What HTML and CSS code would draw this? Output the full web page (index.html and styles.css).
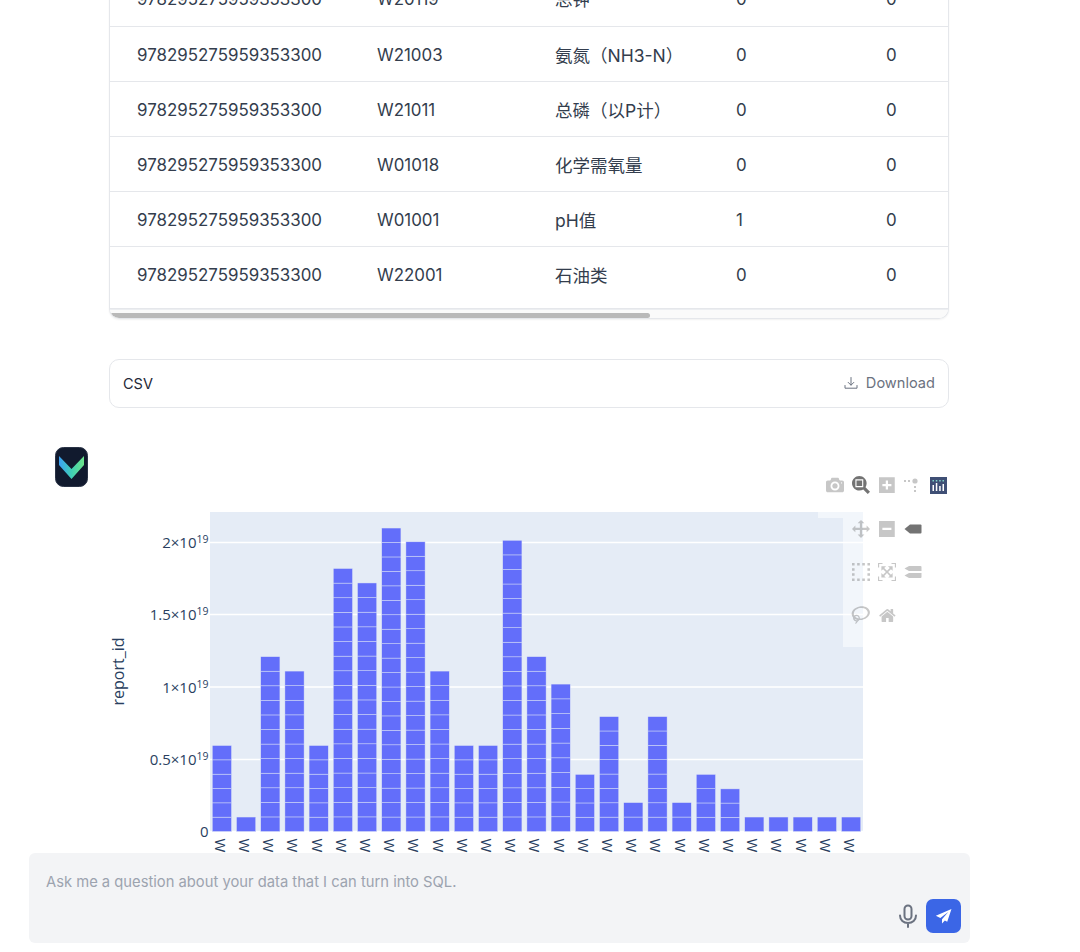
FILE: index.html
```html
<!DOCTYPE html>
<html lang="en">
<head>
<meta charset="utf-8">
<title>Chat</title>
<link rel="stylesheet" href="styles.css">
</head>
<body>
<main class="thread">
  <section class="table-card">
    <div class="table-clip">
      <table class="data">
        <tbody>
          <tr><td>978295275959353300</td><td>W20119</td><td class="cjk">总钾</td><td>0</td><td>0</td></tr>
          <tr><td>978295275959353300</td><td>W21003</td><td class="cjk">氨氮（NH3-N）</td><td>0</td><td>0</td></tr>
          <tr><td>978295275959353300</td><td>W21011</td><td class="cjk">总磷（以P计）</td><td>0</td><td>0</td></tr>
          <tr><td>978295275959353300</td><td>W01018</td><td class="cjk">化学需氧量</td><td>0</td><td>0</td></tr>
          <tr><td>978295275959353300</td><td>W01001</td><td class="cjk">pH值</td><td>1</td><td>0</td></tr>
          <tr><td>978295275959353300</td><td>W22001</td><td class="cjk">石油类</td><td>0</td><td>0</td></tr>
        </tbody>
      </table>
    </div>
    <div class="scroll-track"><div class="scroll-thumb"></div></div>
  </section>

  <section class="csv-bar">
    <span class="csv-label">CSV</span>
    <a class="download">
      <svg class="download-icon" viewBox="0 0 14 14" fill="none" stroke="currentColor" stroke-width="1" stroke-linecap="round" stroke-linejoin="round"><path d="M7 1.500v7.500M4.200 6.400 7 9.200l2.800-2.800M1 9.500V12.200h12V9.500"/></svg>
      <span>Download</span>
    </a>
  </section>

  <section class="answer">
    <svg class="avatar" viewBox="0 0 33 40">
      <defs>
        <linearGradient id="vg" x1="0" y1="0" x2="1" y2="0">
          <stop offset="0" stop-color="#3b9ff5"/>
          <stop offset=".5" stop-color="#3fcfb4"/>
          <stop offset="1" stop-color="#6ee58a"/>
        </linearGradient>
      </defs>
      <rect x="0.500" y="0.500" width="32" height="39" rx="8" fill="#111a2e" stroke="#2a3346"/>
      <path d="M4 9 16.500 22 29 9V18L16.500 32 4 18Z" fill="url(#vg)"/>
    </svg>

    <svg class="chart" viewBox="109 463 840 400">
      <rect x="210" y="512" width="653" height="319.500" fill="#e5ecf6"/>
      <g stroke="#fff" stroke-width="1.500">
        <path d="M210 542.500H863M210 614.500H863M210 687H863M210 759.500H863M210 831.500H863"/>
      </g>
      <g id="bars"></g>
      <g class="tick-y">
        <text x="208.500" y="548" text-anchor="end">2×10<tspan class="sup" dy="-5">19</tspan></text>
        <text x="208.500" y="620" text-anchor="end">1.5×10<tspan class="sup" dy="-5">19</tspan></text>
        <text x="208.500" y="692.500" text-anchor="end">1×10<tspan class="sup" dy="-5">19</tspan></text>
        <text x="208.500" y="764.500" text-anchor="end">0.5×10<tspan class="sup" dy="-5">19</tspan></text>
        <text x="208.500" y="837" text-anchor="end">0</text>
      </g>
      <text class="axis-title" transform="translate(124 671.500) rotate(-90)" text-anchor="middle">report_id</text>
      <g id="xticks" class="tick-x"></g>

      <path d="M818 512H863V647H843V518H818Z" fill="#fff" fill-opacity=".5"/>

      <g class="mode">
        <path transform="translate(826 476) scale(.018) matrix(1 0 0 -1 0 850)" d="m500 450c-83 0-150-67-150-150 0-83 67-150 150-150 83 0 150 67 150 150 0 83-67 150-150 150z m400 150h-120c-16 0-34 13-39 29l-31 93c-6 15-23 28-40 28h-340c-16 0-34-13-39-28l-31-94c-6-15-23-28-40-28h-120c-55 0-100-45-100-100v-450c0-55 45-100 100-100h800c55 0 100 45 100 100v450c0 55-45 100-100 100z m-400-550c-138 0-250 112-250 250 0 138 112 250 250 250 138 0 250-112 250-250 0-138-112-250-250-250z m365 380c-19 0-35 16-35 35 0 19 16 35 35 35 19 0 35-16 35-35 0-19-16-35-35-35z"/>
        <path class="on" transform="translate(852 476) scale(.018) matrix(1 0 0 -1 0 850)" d="m1000-25l-250 251c40 63 63 138 63 218 0 224-182 406-407 406-224 0-406-182-406-406s183-406 407-406c80 0 155 22 218 62l250-250 125 125z m-812 250l0 438 437 0 0-438-437 0z m62 375l313 0 0-312-313 0 0 312z"/>
        <path transform="translate(879 476) scale(.018) matrix(1 0 0 -1 0 850)" d="m1 787l0-875 875 0 0 875-875 0z m687-500l-187 0 0-187-125 0 0 187-188 0 0 125 188 0 0 187 125 0 0-187 187 0 0-125z"/>
        <g>
          <circle cx="915" cy="481" r="2.600"/>
          <rect x="904" y="480" width="2" height="2"/><rect x="908" y="480" width="2" height="2"/>
          <rect x="914" y="486" width="2" height="2"/><rect x="914" y="490" width="2" height="2"/>
        </g>
        <path transform="translate(852 520) scale(.018) matrix(1 0 0 -1 0 850)" d="m1000 350l-187 188 0-125-250 0 0 250 125 0-188 187-187-187 125 0 0-250-250 0 0 125-188-188 186-187 0 125 252 0 0-250-125 0 187-188 188 188-125 0 0 250 250 0 0-125 187 188z"/>
        <path transform="translate(879 520) scale(.018) matrix(1 0 0 -1 0 850)" d="m0 788l0-876 875 0 0 876-875 0z m688-500l-500 0 0 125 500 0 0-125z"/>
        <path class="on" d="M904.500 529 910 524.500H920.500Q921.500 524.500 921.500 525.500V532.500Q921.500 533.500 920.500 533.500H910Z"/>
        <path transform="translate(852 563) scale(.018) matrix(1 0 0 -1 0 850)" d="m0 850l0-143 143 0 0 143-143 0z m286 0l0-143 143 0 0 143-143 0z m285 0l0-143 143 0 0 143-143 0z m286 0l0-143 143 0 0 143-143 0z m-857-286l0-143 143 0 0 143-143 0z m857 0l0-143 143 0 0 143-143 0z m-857-285l0-143 143 0 0 143-143 0z m857 0l0-143 143 0 0 143-143 0z m-857-286l0-143 143 0 0 143-143 0z m286 0l0-143 143 0 0 143-143 0z m285 0l0-143 143 0 0 143-143 0z m286 0l0-143 143 0 0 143-143 0z"/>
        <path transform="translate(878 563) scale(.018) matrix(1 0 0 -1 0 850)" d="m250 850l-187 0-63 0 0-62 0-188 63 0 0 188 187 0 0 62z m688 0l-188 0 0-62 188 0 0-188 62 0 0 188 0 62-62 0z m-875-938l0 188-63 0 0-188 0-62 63 0 187 0 0 62-187 0z m875 188l0-188-188 0 0-62 188 0 62 0 0 62 0 188-62 0z m-125 188l-1 0-93-94-156 156 156 156 92-93 2 0 0 250-250 0 0-2 93-92-156-156-156 156 94 92 0 2-250 0 0-250 0 0 93 93 157-156-157-156-93 94 0 0 0-250 250 0 0 0-94 93 156 157 156-157-93-93 0 0 250 0 0 250z"/>
        <path d="M904.500 568.500 909 566H920.500Q921.500 566 921.500 567V571H909ZM904.500 575.500 909 573H921.500V577Q921.500 578 920.500 578H909Z"/>
        <path transform="translate(851.500 606) scale(.018) matrix(1 0 0 -1 0 850)" d="m1018 538c-36 207-290 336-568 286-277-48-473-256-436-463 10-57 36-108 76-151-13-66 11-137 68-183 34-28 75-41 114-42l-55-70 0 0c-2-1-3-2-4-3-10-14-8-34 5-45 14-11 34-8 45 4 1 1 2 3 2 5l0 0 113 140c16 11 31 24 45 40 4 3 6 7 8 11 48-3 100 0 151 9 278 48 473 255 436 462z m-624-379c-80 14-149 48-197 96 42 42 109 47 156 9 33-26 47-66 41-105z m-187-74c-19 16-33 37-39 60 50-32 109-55 174-68-42-25-95-24-135 8z m360 75c-34-7-69-9-102-8 8 62-16 128-68 170-73 59-175 54-244-5-9 20-16 40-20 61-28 159 121 317 333 354s407-60 434-217c28-159-121-318-333-355z"/>
        <path transform="translate(879 606.500) scale(.018) matrix(1 0 0 -1 0 850)" d="m786 296v-267q0-15-11-26t-25-10h-214v214h-143v-214h-214q-15 0-25 10t-11 26v267q0 1 0 2t0 2l321 264 321-264q1-1 1-4z m124 39l-34-41q-5-5-12-6h-2q-7 0-12 3l-386 322-386-322q-7-4-13-4-7 2-12 7l-35 41q-4 5-3 13t6 12l401 334q18 15 42 15t43-15l136-114v109q0 8 5 13t13 5h107q8 0 13-5t5-13v-227l122-102q5-5 6-12t-4-13z"/>
      </g>
      <g>
        <rect x="930" y="477" width="17" height="17" fill="#3f4f75"/>
        <g fill="#fff"><rect x="932.500" y="485" width="1.500" height="6"/><rect x="935.800" y="483" width="1.500" height="8"/><rect x="939.200" y="486" width="1.500" height="5"/><rect x="942.500" y="484" width="1.500" height="7"/></g>
        <g fill="#7fd5c8"><rect x="932.500" y="480" width="1.500" height="1.500"/><rect x="935.800" y="480" width="1.500" height="1.500"/><rect x="939.200" y="480" width="1.500" height="1.500"/><rect x="942.500" y="480" width="1.500" height="1.500"/></g>
      </g>
    </svg>
  </section>
</main>

<form class="composer">
  <div class="placeholder">Ask me a question about your data that I can turn into SQL.</div>
  <div class="composer-actions">
    <svg class="mic" viewBox="0 0 20 24" fill="none" stroke="#6b7280" stroke-width="2" stroke-linecap="round"><rect x="6.500" y="1.500" width="7" height="14" rx="3.500"/><path d="M2 11.500c0 4.500 3.500 7.500 8 7.500s8-3 8-7.500M10 19v4"/></svg>
    <button class="send" type="button">
      <svg viewBox="0 0 16 16" class="send-icon"><path d="M15.500 1 .8 7.300 5 9.500 12.500 3.800 6.600 10.500V14.500L9.300 11.700 11.500 13Z" fill="#fff"/></svg>
    </button>
  </div>
</form>
<script src="chart.js"></script>
</body>
</html>
```

FILE: styles.css
```css
* { box-sizing: border-box; }
html, body { margin: 0; height: 952px; overflow: hidden; background: #fff; }
body {
  position: relative;
  font-family: Inter, "Noto Sans CJK SC", "Liberation Sans", sans-serif;
  color: #333d4d;
}
.thread { margin-top: -29px; padding-left: 109px; width: 949px; }

.table-card {
  border: 1px solid #e5e7eb;
  border-top: 0;
  border-radius: 0 0 10px 10px;
  overflow: hidden;
  box-shadow: 0 1px 2px rgba(0, 0, 0, .06);
}
.table-clip { overflow: hidden; }
.data { border-collapse: collapse; table-layout: fixed; width: 1300px; font-size: 16.900px; }
.data td { height: 55px; padding: 2px 0 0 27px; border-bottom: 1px solid #e5e7eb; white-space: nowrap; }
.data td.cjk { font-size: 17.500px; padding-top: 1px; }
.data td:nth-child(1) { width: 240px; }
.data td:nth-child(2) { width: 178px; }
.data td:nth-child(3) { width: 181px; }
.data td:nth-child(4) { width: 150px; }
.data tr:last-child td { height: 62px; padding-bottom: 7px; }

.scroll-track { height: 9px; background: #fafafa; border-top: 1px solid #eceef1; overflow: hidden; }
.scroll-thumb { width: 540px; height: 5px; margin-top: 3px; background: #b9b9b9; border-radius: 0 3px 3px 3px; }

.csv-bar {
  display: flex;
  align-items: center;
  justify-content: space-between;
  height: 49px;
  margin-top: 40px;
  padding: 0 13px;
  border: 1px solid #e5e7eb;
  border-radius: 10px;
}
.csv-label { font-size: 14.500px; color: #1f2937; }
.download { display: flex; align-items: center; gap: 8px; font-size: 14.600px; color: #6b7280; }
.download-icon { width: 14px; height: 14px; }

.answer { position: relative; margin-top: 39px; height: 500px; }
.avatar { position: absolute; left: -54px; top: 0; width: 33px; height: 40px; }
.chart { position: absolute; left: 0; top: 16px; width: 840px; height: 400px; overflow: hidden; }

.tick-y text { font: 15px "Open Sans", sans-serif; fill: #2a3f5f; }
.tick-y .sup { font-size: 10.500px; }
.tick-x text { font: 15px "Open Sans", sans-serif; fill: #2a3f5f; }
.axis-title { font: 16px "Open Sans", sans-serif; fill: #2a3f5f; }
.mode path, .mode rect, .mode circle { fill: rgba(68, 68, 68, .3); }
.mode path.on { fill: rgba(68, 68, 68, .75); }

.composer {
  position: absolute;
  left: 29px;
  top: 853px;
  width: 941px;
  height: 90px;
  padding: 20px 9px 10px 17px;
  background: #f3f4f6;
  border-radius: 6px;
  display: flex;
  flex-direction: column;
  justify-content: space-between;
}
.placeholder { font-size: 14.750px; line-height: 18px; color: #9ca3af; }
.composer-actions { display: flex; justify-content: flex-end; align-items: center; gap: 8px; }
.mic { width: 20px; height: 24px; }
.send {
  display: flex;
  align-items: center;
  justify-content: center;
  width: 35px;
  height: 34px;
  padding: 0;
  border: 0;
  border-radius: 7px;
  background: #3b66e6;
}
.send-icon { width: 17px; height: 17px; }
```

FILE: chart.js
```js
var NS = "http://www.w3.org/2000/svg";
var vals = [5.95,1,12.1,11.1,5.95,18.2,17.2,21,20.05,11.1,5.95,5.95,20.15,12.1,10.2,3.95,7.95,2,7.95,2,3.95,2.95,1,1,1,1,1];
var codes = ["W20119","W21003","W21011","W01018","W01001","W22001"];
var unit = 14.45, base = 831.5;
var bars = document.getElementById("bars");
var ticks = document.getElementById("xticks");
vals.forEach(function (v, i) {
  var x = 212.3 + i * 24.2;
  var n = Math.round(v);
  var h = unit * v / n;
  for (var s = 0; s < n; s++) {
    var r = document.createElementNS(NS, "rect");
    r.setAttribute("x", x);
    r.setAttribute("y", base - (s + 1) * h);
    r.setAttribute("width", 19.2);
    r.setAttribute("height", h);
    r.setAttribute("fill", "#636efa");
    r.setAttribute("stroke", "#e5ecf6");
    r.setAttribute("stroke-opacity", ".7");
    r.setAttribute("stroke-width", ".6");
    bars.appendChild(r);
  }
  var t = document.createElementNS(NS, "text");
  t.textContent = codes[i % codes.length];
  t.setAttribute("transform", "translate(" + (x + 2.5) + " 838.500) rotate(90)");
  ticks.appendChild(t);
});
```
